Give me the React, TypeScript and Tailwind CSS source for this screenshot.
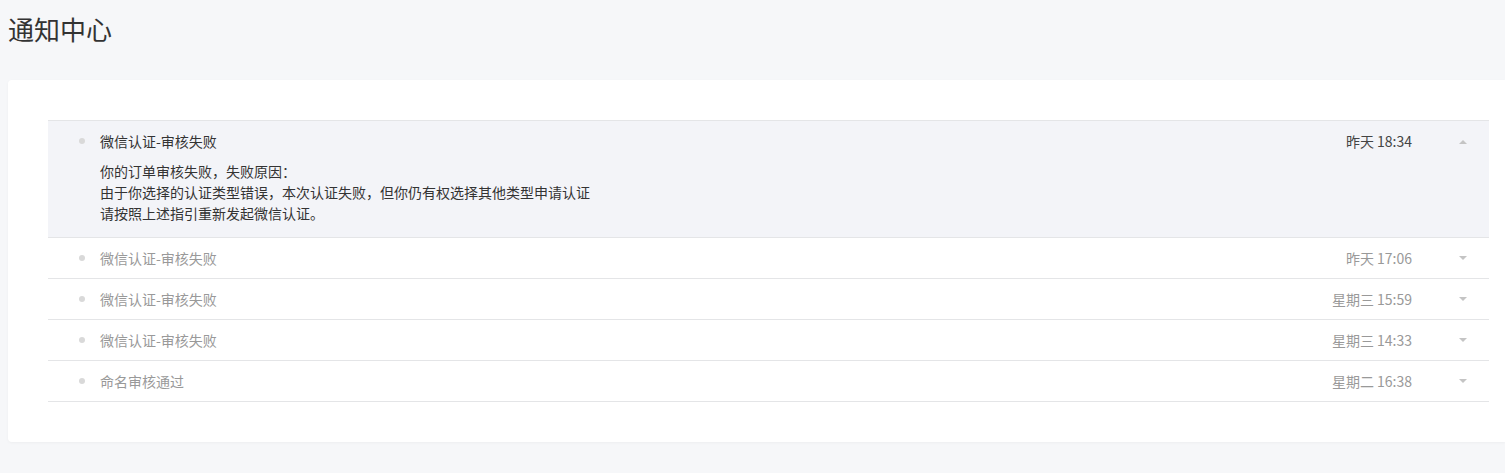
const items = [
  {
    title: "微信认证-审核失败",
    time: "昨天 18:34",
    open: true,
    body: [
      "你的订单审核失败，失败原因：",
      "由于你选择的认证类型错误，本次认证失败，但你仍有权选择其他类型申请认证",
      "请按照上述指引重新发起微信认证。",
    ],
  },
  { title: "微信认证-审核失败", time: "昨天 17:06", open: false, body: [] },
  { title: "微信认证-审核失败", time: "星期三 15:59", open: false, body: [] },
  { title: "微信认证-审核失败", time: "星期三 14:33", open: false, body: [] },
  { title: "命名审核通过", time: "星期二 16:38", open: false, body: [] },
];

function Arrow({ up }: { up: boolean }) {
  return (
    <svg width="8" height="5" viewBox="0 0 8 5" className="shrink-0">
      {up ? (
        <path d="M0 5 L4 1 L8 5 Z" fill="#c4c4c4" />
      ) : (
        <path d="M0 0 L8 0 L4 4 Z" fill="#c4c4c4" />
      )}
    </svg>
  );
}

export default function App() {
  return (
    <main className="min-h-[473px] bg-[#f6f7f9] pl-2 font-['Noto_Sans_CJK_SC','Noto_Sans',sans-serif]">
      {/* Header */}
      <h1 className="h-20 pt-[11px] text-[26px] leading-[36px] font-normal text-[#333]">
        通知中心
      </h1>

      {/* Card */}
      <section className="bg-white rounded-l-[4px] shadow-[0_1px_3px_rgba(0,0,0,0.04)] pl-10 pr-4 py-10">
        <ul className="border-t border-[#e4e5e7]">
          {items.map((item, index) => (
            <li
              key={index}
              className={
                item.open
                  ? "bg-[#f3f4f8] border-b border-[#e4e5e7] pb-[13px]"
                  : "border-b border-[#e4e5e7]"
              }
            >
              <div className="h-10 flex items-center text-[14px]">
                <span className="ml-[31px] mr-[15px] w-[6px] h-[6px] rounded-full bg-[#d9d9d9] shrink-0" />
                <span className={item.open ? "text-[#333]" : "text-[#999]"}>
                  {item.title}
                </span>
                <span
                  className={
                    item.open
                      ? "ml-auto text-[14px] text-[#444]"
                      : "ml-auto text-[14px] text-[#999]"
                  }
                >
                  {item.time}
                </span>
                <span className="ml-[47px] mr-[22px] flex items-center">
                  <Arrow up={item.open} />
                </span>
              </div>
              {item.open && (
                <div className="pl-[52px] text-[14px] leading-[21px] text-[#333]">
                  {item.body.map((line, i) => (
                    <p key={i}>{line}</p>
                  ))}
                </div>
              )}
            </li>
          ))}
        </ul>
      </section>
    </main>
  );
}
